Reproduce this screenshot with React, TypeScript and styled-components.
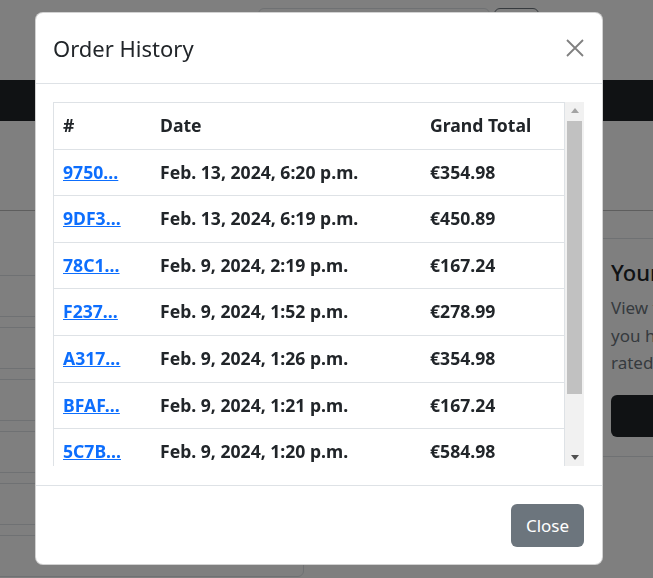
import React from "react";
import styled, { createGlobalStyle } from "styled-components";

const Global = createGlobalStyle`
  *, *::before, *::after { box-sizing: border-box; }
  html, body { margin: 0; padding: 0; }
  body {
    font-family: "Noto Sans", "Open Sans", sans-serif;
    color: #212529;
    background: #fff;
    overflow: hidden;
  }
`;

/* ---------- background page ---------- */
const Page = styled.div`
  width: 653px;
  height: 578px;
  overflow: hidden;
  display: flex;
  flex-direction: column;
`;

const TopBar = styled.div`
  height: 80px;
  flex: none;
  display: flex;
  gap: 4px;
  padding: 8px 0 0 258px;
`;

const SearchInput = styled.div`
  width: 232px;
  height: 38px;
  border: 1px solid #dee2e6;
  border-radius: 6px;
`;

const SearchButton = styled.div`
  width: 45px;
  height: 38px;
  border: 1px solid #6c757d;
  border-radius: 6px;
`;

const NavBar = styled.div`
  height: 41px;
  flex: none;
  background: #212529;
`;

const Spacer = styled.div`
  height: 89px;
  flex: none;
`;

const Main = styled.div`
  flex: none;
  display: grid;
  grid-template-columns: 304px 299px 320px;
  border-top: 1px solid #bdbdbd;
`;

const LeftColumn = styled.div`
  display: flex;
  flex-direction: column;
  gap: 10px;
  padding-top: 64px;
  margin-left: -20px;
`;

const FieldBox = styled.div`
  height: 42px;
  border: 1px solid #dee2e6;
  border-radius: 6px;
`;

const RightCard = styled.div`
  grid-column: 3;
  height: 246px;
  border-bottom: 1px solid #dee2e6;
  display: flex;
  flex-direction: column;
`;

const CardHead = styled.div`
  height: 28px;
  flex: none;
  border-bottom: 1px solid #dee2e6;
`;

const CardBody = styled.div`
  padding: 18px 8px 0;
  display: flex;
  flex-direction: column;
`;

const CardTitle = styled.div`
  font-size: 22px;
  font-weight: 500;
  line-height: 30px;
  color: #212529;
  margin-bottom: 7px;
  white-space: nowrap;
`;

const CardText = styled.div`
  font-size: 17px;
  line-height: 27.5px;
  color: #6c757d;
  white-space: nowrap;
`;

const DarkButton = styled.div`
  margin-top: 18px;
  width: 200px;
  height: 42px;
  border-radius: 6px;
  background: #212529;
`;

/* ---------- modal ---------- */
const Overlay = styled.div`
  position: fixed;
  inset: 0;
  background: rgba(0, 0, 0, 0.5);
  padding: 12px 0 0 35px;
`;

const Dialog = styled.div`
  width: 568px;
  height: 553px;
  background: #fff;
  border: 1px solid rgba(0, 0, 0, 0.175);
  border-radius: 8px;
  display: flex;
  flex-direction: column;
`;

const Header = styled.div`
  height: 71px;
  flex: none;
  display: flex;
  align-items: center;
  justify-content: space-between;
  padding: 0 18px 0 17px;
  border-bottom: 1px solid #dee2e6;
`;

const Title = styled.h5`
  margin: 0;
  font-size: 22px;
  font-weight: 400;
  line-height: 30px;
  color: #212529;
`;

const CloseX = styled.button`
  width: 18px;
  height: 18px;
  padding: 0;
  border: 0;
  background: transparent;
  display: flex;
  cursor: pointer;
`;

const Body = styled.div`
  flex: none;
  padding: 18px 18px 19px 17px;
`;

const ScrollFrame = styled.div`
  height: 364px;
  display: flex;
`;

const Scroller = styled.div`
  width: 512px;
  height: 100%;
  overflow-y: auto;
  scrollbar-width: none;
  &::-webkit-scrollbar {
    display: none;
  }
`;

const ScrollBar = styled.div`
  width: 19px;
  flex: none;
  background: #f1f1f1;
  display: flex;
  flex-direction: column;
`;

const ArrowButton = styled.div`
  height: 17px;
  flex: none;
  display: flex;
  align-items: center;
  justify-content: center;
`;

const Track = styled.div`
  flex: 1;
  padding: 2px 2px 0;
`;

const Thumb = styled.div`
  background: #c1c1c1;
`;

const Table = styled.table`
  width: 512px;
  table-layout: fixed;
  border-collapse: separate;
  border-spacing: 0;
  border: 1px solid #dee2e6;
  margin-bottom: 18px;
`;

const Cell = styled.td<{ $w?: number }>`
  ${(p) => (p.$w ? `width: ${p.$w}px;` : "")}
  padding: 10px 9px;
  line-height: 25.6px;
  font-size: 17.6px;
  font-weight: 700;
  color: #212529;
  text-align: left;
  border-bottom: 1px solid #dee2e6;
  white-space: nowrap;
`;

const OrderLink = styled.a`
  color: #0d6efd;
  text-decoration: underline;
`;

const Footer = styled.div`
  flex: 1;
  display: flex;
  justify-content: flex-end;
  align-items: flex-start;
  padding: 18px 18px 0;
  border-top: 1px solid #dee2e6;
`;

const CloseButton = styled.button`
  width: 73px;
  height: 43px;
  border: 0;
  border-radius: 6px;
  background: #6c757d;
  color: #fff;
  font-family: inherit;
  font-size: 17px;
  line-height: 27px;
  padding: 0;
  cursor: pointer;
`;

const orders = [
  ["9750…", "Feb. 13, 2024, 6:20 p.m.", "€354.98"],
  ["9DF3…", "Feb. 13, 2024, 6:19 p.m.", "€450.89"],
  ["78C1…", "Feb. 9, 2024, 2:19 p.m.", "€167.24"],
  ["F237…", "Feb. 9, 2024, 1:52 p.m.", "€278.99"],
  ["A317…", "Feb. 9, 2024, 1:26 p.m.", "€354.98"],
  ["BFAF…", "Feb. 9, 2024, 1:21 p.m.", "€167.24"],
  ["5C7B…", "Feb. 9, 2024, 1:20 p.m.", "€584.98"],
  ["3E1A…", "Feb. 9, 2024, 1:12 p.m.", "€278.99"],
];

export default function App() {
  return (
    <>
      <Global />
      <Page>
        <TopBar>
          <SearchInput />
          <SearchButton />
        </TopBar>
        <NavBar />
        <Spacer />
        <Main>
          <LeftColumn>
            {Array.from({ length: 6 }).map((_, i) => (
              <FieldBox key={i} />
            ))}
          </LeftColumn>
          <RightCard>
            <CardHead />
            <CardBody>
              <CardTitle>Your Reviews</CardTitle>
              <CardText>
                View the products
                <br />
                you have reviewed and
                <br />
                rated.
              </CardText>
              <DarkButton />
            </CardBody>
          </RightCard>
        </Main>
      </Page>
      <Overlay>
        <Dialog>
          <Header>
            <Title>Order History</Title>
            <CloseX aria-label="Close">
              <svg width="18" height="18" viewBox="0 0 18 18">
                <path d="M1 1L17 17M17 1L1 17" stroke="#808080" strokeWidth="1.8" fill="none" />
              </svg>
            </CloseX>
          </Header>
          <Body>
            <ScrollFrame>
              <Scroller>
                <Table>
                  <thead>
                    <tr>
                      <Cell as="th" $w={97}>#</Cell>
                      <Cell as="th" $w={270}>Date</Cell>
                      <Cell as="th">Grand Total</Cell>
                    </tr>
                  </thead>
                  <tbody>
                    {orders.map(([id, date, total]) => (
                      <tr key={id}>
                        <Cell>
                          <OrderLink href="#">{id}</OrderLink>
                        </Cell>
                        <Cell>{date}</Cell>
                        <Cell>{total}</Cell>
                      </tr>
                    ))}
                  </tbody>
                </Table>
              </Scroller>
              <ScrollBar>
                <ArrowButton>
                  <svg width="8" height="5" viewBox="0 0 8 5">
                    <path d="M0 5L4 0L8 5Z" fill="#a3a3a3" />
                  </svg>
                </ArrowButton>
                <Track>
                  <Thumb style={{ height: 273 }} />
                </Track>
                <ArrowButton>
                  <svg width="8" height="5" viewBox="0 0 8 5">
                    <path d="M0 0L8 0L4 5Z" fill="#505050" />
                  </svg>
                </ArrowButton>
              </ScrollBar>
            </ScrollFrame>
          </Body>
          <Footer>
            <CloseButton>Close</CloseButton>
          </Footer>
        </Dialog>
      </Overlay>
    </>
  );
}
